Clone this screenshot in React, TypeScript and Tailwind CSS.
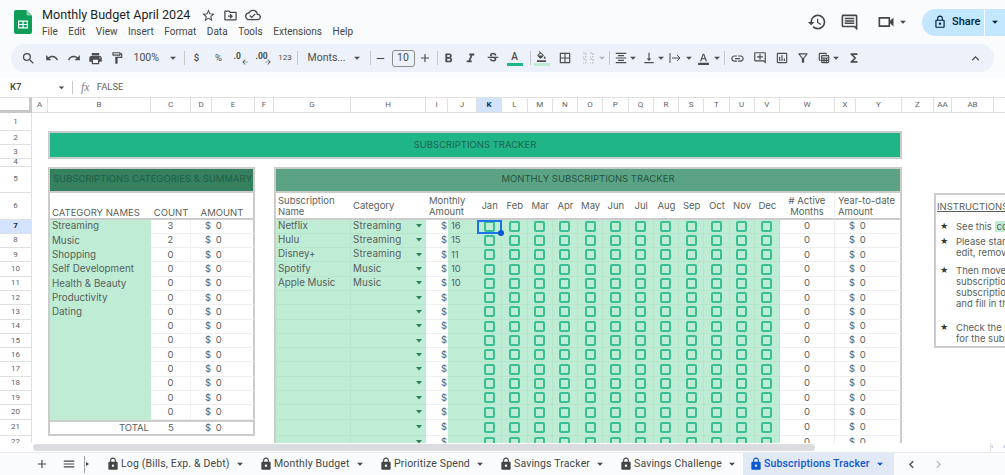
import type { ReactNode } from "react";
import {
  MdAdd,
  MdArrowBack,
  MdArrowDropDown,
  MdArrowForward,
  MdBorderAll,
  MdChevronLeft,
  MdChevronRight,
  MdFormatAlignCenter,
  MdFormatBold,
  MdFormatColorFill,
  MdFormatColorText,
  MdFormatItalic,
  MdFunctions,
  MdHistory,
  MdKeyboardArrowUp,
  MdLink,
  MdLock,
  MdLockOutline,
  MdMenu,
  MdOutlineAddComment,
  MdOutlineCloudDone,
  MdOutlineComment,
  MdOutlineDriveFileMove,
  MdOutlineFilterAlt,
  MdOutlineFormatPaint,
  MdOutlineInsertChart,
  MdOutlineTableView,
  MdOutlineVideocam,
  MdPrint,
  MdRedo,
  MdRemove,
  MdSearch,
  MdStarBorder,
  MdStrikethroughS,
  MdUndo,
  MdVerticalAlignBottom,
} from "react-icons/md";

const COLUMNS = ["A", "B", "C", "D", "E", "F", "G", "H", "I", "J", "K", "L", "M", "N", "O", "P", "Q", "R", "S", "T", "U", "V", "W", "X", "Y", "Z", "AA", "AB", "AC"];
const MONTHS = ["Jan", "Feb", "Mar", "Apr", "May", "Jun", "Jul", "Aug", "Sep", "Oct", "Nov", "Dec"];
const MENUS = ["File", "Edit", "View", "Insert", "Format", "Data", "Tools", "Extensions", "Help"];
const TABS = [
  { name: "Log (Bills, Exp. & Debt)", width: "w-[153px]" },
  { name: "Monthly Budget", width: "w-[120px]" },
  { name: "Prioritize Spend", width: "w-[120px]" },
  { name: "Savings Tracker", width: "w-[120px]" },
  { name: "Savings Challenge", width: "w-[124px]" },
];

const categories = [
  ["Streaming", "3"],
  ["Music", "2"],
  ["Shopping", "0"],
  ["Self Development", "0"],
  ["Health & Beauty", "0"],
  ["Productivity", "0"],
  ["Dating", "0"],
  ["", "0"],
  ["", "0"],
  ["", "0"],
  ["", "0"],
  ["", "0"],
  ["", "0"],
  ["", "0"],
];

const subscriptions = [
  ["Netflix", "Streaming", "16"],
  ["Hulu", "Streaming", "15"],
  ["Disney+", "Streaming", "11"],
  ["Spotify", "Music", "10"],
  ["Apple Music", "Music", "10"],
];

// col and row are 1-based sheet positions, the header takes the first track of the grid
function Cell({
  col,
  row,
  colSpan = 1,
  rowSpan = 1,
  className = "",
  children,
}: {
  col: number;
  row: number;
  colSpan?: number;
  rowSpan?: number;
  className?: string;
  children?: ReactNode;
}) {
  return (
    <div
      className={`flex min-w-0 overflow-hidden whitespace-nowrap ${className}`}
      style={{ gridColumn: `${col + 1} / span ${colSpan}`, gridRow: `${row + 1} / span ${rowSpan}` }}
    >
      {children}
    </div>
  );
}

function ToolIcon({ width = "w-[22px]", className = "", children }: { width?: string; className?: string; children: ReactNode }) {
  return <div className={`flex h-full shrink-0 items-center justify-center ${width} ${className}`}>{children}</div>;
}

function Divider({ className = "" }: { className?: string }) {
  return <div className={`h-[14px] w-px shrink-0 bg-[#c7c7c7] ${className}`} />;
}

function Caret({ className = "" }: { className?: string }) {
  return <MdArrowDropDown className={`shrink-0 text-[14px] ${className}`} />;
}

function Logo() {
  return (
    <svg width="18" height="24" viewBox="0 0 18 24" className="shrink-0">
      <path d="M2 0h10.5L18 5.5V22a2 2 0 0 1-2 2H2a2 2 0 0 1-2-2V2a2 2 0 0 1 2-2z" fill="#0f9d58" />
      <path d="M12.5 0L18 5.5h-4a1.5 1.5 0 0 1-1.5-1.5z" fill="#87ceac" />
      <path d="M4 10.5h10v8H4z" fill="#fff" />
      <path d="M5.200 11.700h3.200v2.200H5.200zM9.600 11.700h3.200v2.200H9.600zM5.200 15.100h3.200v2.200H5.200zM9.600 15.100h3.200v2.200H9.600z" fill="#0f9d58" />
    </svg>
  );
}

function TopBar() {
  return (
    <div className="flex h-[44px] items-center bg-[#f9fbfd] pl-[14px]">
      <Logo />
      <div className="ml-[10px] flex flex-col">
        <div className="flex h-[20px] items-center text-[#1f1f1f]">
          <span className="text-[12.6px] leading-none">Monthly Budget April 2024</span>
          <MdStarBorder className="ml-[11px] text-[15px] text-[#444746]" />
          <MdOutlineDriveFileMove className="ml-[7px] text-[15px] text-[#444746]" />
          <MdOutlineCloudDone className="ml-[7px] text-[16px] text-[#444746]" />
        </div>
        <div className="flex gap-[10.6px] text-[10px] leading-[14px] text-[#444746]">
          {MENUS.map((menu) => (
            <span key={menu}>{menu}</span>
          ))}
        </div>
      </div>
      <div className="ml-auto flex items-center text-[#444746]">
        <MdHistory className="text-[20px]" />
        <MdOutlineComment className="ml-[13px] text-[19px]" />
        <MdOutlineVideocam className="ml-[17px] text-[20px]" />
        <Caret />
        <div className="ml-[12px] flex h-[27px] w-[83px] items-center rounded-l-full bg-[#c2e7ff] text-[#001d35]">
          <MdLockOutline className="ml-[11px] text-[14px]" />
          <span className="ml-[5px] text-[11px] font-medium">Share</span>
          <div className="ml-[4px] h-full w-px bg-[#f9fbfd]" />
          <Caret className="ml-[3px]" />
        </div>
      </div>
    </div>
  );
}

function Toolbar() {
  return (
    <div className="bg-[#f9fbfd] px-[11px] pb-[5px]">
      <div className="flex h-[28px] items-center rounded-full bg-[#edf2fa] pl-[7px] text-[#4a4d4c]">
        <ToolIcon width="w-[21.500px]"><MdSearch className="text-[15px]" /></ToolIcon>
        <ToolIcon width="w-[21.500px]" className="ml-[2px]"><MdUndo className="text-[14px]" /></ToolIcon>
        <ToolIcon width="w-[21.500px]"><MdRedo className="text-[14px]" /></ToolIcon>
        <ToolIcon width="w-[21.500px]"><MdPrint className="text-[15px]" /></ToolIcon>
        <ToolIcon width="w-[21.500px]"><MdOutlineFormatPaint className="text-[14px]" /></ToolIcon>
        <div className="ml-[6px] flex w-[44px] items-center text-[10.5px]">
          <span>100%</span>
          <Caret className="ml-[7px]" />
        </div>
        <Divider className="ml-[6px] mr-[1px]" />
        <ToolIcon className="text-[9.5px] font-medium">$</ToolIcon>
        <ToolIcon className="text-[9.5px]">%</ToolIcon>
        <ToolIcon>
          <div className="relative h-[14px] w-[14px] text-[8.5px] font-bold leading-[10px]">
            .0
            <MdArrowBack className="absolute bottom-[-1px] right-[-1px] text-[8px]" />
          </div>
        </ToolIcon>
        <ToolIcon width="w-[23px]">
          <div className="relative h-[14px] w-[15px] text-[8.5px] font-bold leading-[10px]">
            .00
            <MdArrowForward className="absolute bottom-[-1px] right-[-1px] text-[8px]" />
          </div>
        </ToolIcon>
        <ToolIcon width="w-[21px]" className="text-[8px]">123</ToolIcon>
        <Divider className="ml-[1px]" />
        <div className="ml-[10px] flex w-[56px] shrink-0 items-center text-[10.5px]">
          <span className="w-[42px]">Monts...</span>
          <Caret />
        </div>
        <Divider className="ml-[6px]" />
        <ToolIcon width="w-[20px]"><MdRemove className="text-[13px]" /></ToolIcon>
        <div className="mx-[1px] flex h-[17px] w-[23px] shrink-0 items-center justify-center rounded-[3px] border border-[#8a8d8c] text-[10.5px]">10</div>
        <ToolIcon width="w-[18px]"><MdAdd className="text-[14px]" /></ToolIcon>
        <Divider className="ml-[3px]" />
        <ToolIcon><MdFormatBold className="text-[15px]" /></ToolIcon>
        <ToolIcon><MdFormatItalic className="text-[15px]" /></ToolIcon>
        <ToolIcon><MdStrikethroughS className="text-[14px]" /></ToolIcon>
        <ToolIcon>
          <div className="flex flex-col items-center">
            <span className="text-[10px] font-medium leading-[11px]">A</span>
            <div className="mt-[1px] h-[3px] w-[16px] bg-[#20b586]" />
          </div>
        </ToolIcon>
        <Divider className="ml-[4px]" />
        <ToolIcon>
          <div className="flex flex-col items-center">
            <MdFormatColorFill className="text-[11px]" />
            <div className="mt-[1px] h-[3px] w-[16px] bg-[#bfecd5]" />
          </div>
        </ToolIcon>
        <ToolIcon width="w-[24px]"><MdBorderAll className="text-[14px]" /></ToolIcon>
        <ToolIcon className="text-[#b4b8bd]">
          <svg width="12" height="12" viewBox="0 0 12 12" fill="none" stroke="currentColor" strokeWidth="1">
            <path d="M1 1h3v4H1M8 1h3v4H8M1 7h3v4H1M8 7h3v4H8" strokeDasharray="2 1" />
          </svg>
        </ToolIcon>
        <Caret className="-ml-[4px] text-[#b4b8bd]" />
        <Divider />
        <ToolIcon width="w-[14px]" className="ml-[4px]"><MdFormatAlignCenter className="text-[14px]" /></ToolIcon>
        <Caret className="-ml-[2px]" />
        <ToolIcon width="w-[14px]" className="ml-[2px]"><MdVerticalAlignBottom className="text-[14px]" /></ToolIcon>
        <Caret className="-ml-[2px]" />
        <ToolIcon width="w-[14px]" className="ml-[1px]">
          <svg width="13" height="12" viewBox="0 0 13 12" fill="none" stroke="currentColor" strokeWidth="1">
            <path d="M1 1v10M3 6h8M8 3l3 3-3 3" />
          </svg>
        </ToolIcon>
        <Caret className="-ml-[1px]" />
        <ToolIcon width="w-[14px]" className="ml-[1px]"><MdFormatColorText className="text-[13px]" /></ToolIcon>
        <Caret className="-ml-[1px]" />
        <Divider />
        <ToolIcon className="ml-[2px]"><MdLink className="text-[15px]" /></ToolIcon>
        <ToolIcon><MdOutlineAddComment className="text-[14px]" /></ToolIcon>
        <ToolIcon><MdOutlineInsertChart className="text-[14px]" /></ToolIcon>
        <ToolIcon width="w-[21px]"><MdOutlineFilterAlt className="text-[14px]" /></ToolIcon>
        <ToolIcon width="w-[18px]" className="ml-[1px]"><MdOutlineTableView className="text-[14px]" /></ToolIcon>
        <Caret className="-ml-[4px]" />
        <ToolIcon width="w-[18px]" className="ml-[2px]"><MdFunctions className="text-[14px]" /></ToolIcon>
        <MdKeyboardArrowUp className="ml-auto mr-[11px] text-[15px]" />
      </div>
    </div>
  );
}

function FormulaBar() {
  return (
    <div className="flex h-[20px] items-center bg-white text-[9.5px] text-[#444746]">
      <span className="ml-[10px] w-[45px] font-medium">K7</span>
      <MdArrowDropDown className="text-[13px]" />
      <div className="ml-[4px] h-[13px] w-px bg-[#c7c7c7]" />
      <span className="ml-[8px] font-['Liberation_Serif',serif] text-[12px] italic text-[#80868b]">fx</span>
      <span className="ml-[7px] text-[#5f6368]">FALSE</span>
    </div>
  );
}

function Checkbox() {
  return <div className="m-auto h-[11px] w-[11px] rounded-[2px] border-2 border-[#3abf95]" />;
}

function SummaryTable() {
  return (
    <>
      <Cell col={2} row={5} colSpan={4} className="items-center border-2 border-[#cccccc] bg-[#34805f] pl-[3px] text-[9.5px] text-[#215e47]">
        SUBSCRIPTIONS CATEGORIES &amp; SUMMARY
      </Cell>
      <Cell col={2} row={6} className="items-end border-b-2 border-l-2 border-[#cccccc] pl-[2px] leading-[11px]">CATEGORY NAMES</Cell>
      <Cell col={3} row={6} className="items-end justify-center border-b-2 border-[#cccccc] leading-[11px]">COUNT</Cell>
      <Cell col={4} row={6} colSpan={2} className="items-end justify-center border-b-2 border-r-2 border-[#cccccc] leading-[11px]">AMOUNT</Cell>
      {categories.map(([name, count], i) => (
        <div key={i} className="contents">
          <Cell col={2} row={7 + i} className="items-center border-l-2 border-[#cccccc] bg-[#bfecd5] pl-[2px] text-[9.8px]">{name}</Cell>
          <Cell col={3} row={7 + i} className="items-center justify-center border-b border-r border-[#efefef]">{count}</Cell>
          <Cell col={4} row={7 + i} colSpan={2} className="items-center border-b border-r-2 border-b-[#efefef] border-r-[#cccccc] pl-[14px] [word-spacing:2px]">
            $ 0
          </Cell>
        </div>
      ))}
      <Cell col={2} row={21} className="items-center justify-end border-2 border-r-0 border-[#cccccc] pr-[2px]">TOTAL</Cell>
      <Cell col={3} row={21} className="items-center justify-center border-y-2 border-[#cccccc]">5</Cell>
      <Cell col={4} row={21} colSpan={2} className="items-center border-y-2 border-r-2 border-[#cccccc] pl-[14px] [word-spacing:2px]">$ 0</Cell>
    </>
  );
}

function TrackerTable() {
  const rows = Array.from({ length: 16 }, (_, i) => i);
  return (
    <>
      <Cell col={7} row={5} colSpan={19} className="items-center justify-center border-2 border-[#cccccc] bg-[#5ca385] text-[9.5px] text-[#24543f]">
        MONTHLY SUBSCRIPTIONS TRACKER
      </Cell>
      <Cell col={7} row={6} className="items-center border-b-2 border-l-2 border-[#cccccc] pl-[2px] pt-[2px] leading-[11px] whitespace-pre">{"Subscription\nName"}</Cell>
      <Cell col={8} row={6} className="items-center border-b-2 border-[#cccccc] pl-[2px] pt-[2px]">Category</Cell>
      <Cell col={9} row={6} colSpan={2} className="items-center border-b-2 border-[#cccccc] pl-[3px] pt-[2px] leading-[11px] whitespace-pre">{"Monthly\nAmount"}</Cell>
      {MONTHS.map((month, i) => (
        <Cell key={month} col={11 + i} row={6} className="items-center justify-center border-b-2 border-[#cccccc] pt-[2px]">{month}</Cell>
      ))}
      <Cell col={23} row={6} className="items-center justify-center border-b-2 border-r border-b-[#cccccc] border-r-[#efefef] pt-[2px] text-center leading-[11px] whitespace-pre">{"# Active\nMonths"}</Cell>
      <Cell col={24} row={6} colSpan={2} className="items-center border-b-2 border-r-2 border-[#cccccc] pl-[3px] pt-[2px] leading-[11px] whitespace-pre">{"Year-to-date\nAmount"}</Cell>
      {rows.map((i) => {
        const sub = subscriptions[i];
        return (
          <div key={i} className="contents">
            <Cell col={7} row={7 + i} className="items-center border-b border-l-2 border-r border-b-[#b6e5cc] border-l-[#cccccc] border-r-[#b6e5cc] bg-[#bfecd5] pl-[2px] text-[9.8px]">{sub?.[0]}</Cell>
            <Cell col={8} row={7 + i} className="items-center border-b border-[#b6e5cc] bg-[#bfecd5] pl-[2px] text-[9.8px] tracking-[0.15px]">
              {sub?.[1]}
              <svg width="6" height="4" viewBox="0 0 6 4" className="ml-auto mr-[4px] shrink-0">
                <path d="M0 0h6L3 3.500z" fill="#2e7d5b" />
              </svg>
            </Cell>
            <Cell col={9} row={7 + i} className="items-center justify-end border-b border-[#efefef] pr-[1px]">$</Cell>
            <Cell col={10} row={7 + i} className="items-center border-b border-[#b6e5cc] bg-[#bfecd5] pl-[3px]">{sub?.[2]}</Cell>
            {MONTHS.map((month, m) => (
              <Cell key={month} col={11 + m} row={7 + i} className="border-b border-r border-[#b6e5cc] bg-[#bfecd5]">
                <Checkbox />
              </Cell>
            ))}
            <Cell col={23} row={7 + i} className="items-center justify-center border-b border-r border-[#efefef]">0</Cell>
            <Cell col={24} row={7 + i} colSpan={2} className="items-center border-b border-r-2 border-b-[#efefef] border-r-[#cccccc] pl-[14px] [word-spacing:2px]">$ 0</Cell>
          </div>
        );
      })}
    </>
  );
}

function Instructions() {
  const items = [
    { lines: ["See this color cell"], chip: true, gap: "mb-[4px]" },
    { lines: ["Please start by adding your categories,", "edit, remove or add more as you need."], gap: "mb-[7px]" },
    { lines: ["Then move on to listing all of your", "subscriptions, select a category for each", "subscription, type the monthly amount", "and fill in the checkboxes."], gap: "mb-[13px]" },
    { lines: ["Check the box each month you paid", "for the subscription."], gap: "" },
  ];
  return (
    <Cell col={27} row={6} colSpan={3} rowSpan={10} className="flex-col border-2 border-r-0 border-[#cccccc] pl-[1px] text-[9.5px] leading-[11px]">
      <span className="mt-[6px] underline">INSTRUCTIONS</span>
      <div className="mt-[9px] flex flex-col">
        {items.map((item, i) => (
          <div key={i} className={`flex ${item.gap}`}>
            <span className="w-[19px] shrink-0 pl-[3px] text-[8px] text-[#333]">★</span>
            <div className="flex flex-col">
              {item.lines.map((line) =>
                item.chip ? (
                  <span key={line}>
                    See this <span className="bg-[#bfecd5] px-[2px]">color</span> cell
                  </span>
                ) : (
                  <span key={line}>{line}</span>
                ),
              )}
            </div>
          </div>
        ))}
      </div>
    </Cell>
  );
}

function Sheet() {
  const rowNumbers = Array.from({ length: 22 }, (_, i) => i + 1);
  return (
    <div className="grid h-[346px] grid-cols-[32px_16px_103px_40px_21px_43px_19px_77px_75px_22px_29px_repeat(12,25.25px)_55px_21px_46px_32px_18px_42px_60px] grid-rows-[16px_18px_14px_14px_7.5px_26px_27px_repeat(14,14.3px)_16px_14px] overflow-hidden bg-white font-['Inter',sans-serif] text-[9.5px] text-[#585f5b]">
      <div className="col-start-1 row-start-1 border-b-[3px] border-r-[3px] border-t border-[#c7c7c7] border-t-[#e0e0e0]" />
      {COLUMNS.map((name, i) => (
        <div
          key={name}
          className={`flex items-center justify-center border-b border-r border-t border-[#e0e0e0] font-['Roboto',sans-serif] text-[8px] ${name === "K" ? "bg-[#d3e3fd] font-bold text-[#0b2f66]" : "text-[#5f6368]"}`}
          style={{ gridColumn: i + 2, gridRow: 1 }}
        >
          {name}
        </div>
      ))}
      {rowNumbers.map((n) => (
        <div
          key={n}
          className={`flex items-center justify-center border-b border-r border-[#e0e0e0] font-['Roboto',sans-serif] text-[8px] ${n === 7 ? "bg-[#d3e3fd] font-bold text-[#0b2f66]" : "text-[#5f6368]"}`}
          style={{ gridColumn: 1, gridRow: n + 1 }}
        >
          {n}
        </div>
      ))}

      <Cell col={2} row={2} colSpan={24} rowSpan={2} className="items-center justify-center border-2 border-[#cccccc] bg-[#20b586] text-[9.5px] text-[#1f6350]">
        SUBSCRIPTIONS TRACKER
      </Cell>

      <SummaryTable />
      <TrackerTable />
      <Instructions />

      <Cell col={11} row={7} className="relative z-10 overflow-visible border-2 border-[#1a73e8]">
        <span className="absolute bottom-[-4px] right-[-4px] h-[6px] w-[6px] rounded-full bg-[#0b57d0]" />
      </Cell>
    </div>
  );
}

function Scrollbar() {
  return (
    <div className="flex h-[9px] items-center bg-white pl-[33px]">
      <div className="h-[7px] w-[782px] rounded-full bg-[#dadce0]" />
      <div className="ml-auto flex h-full w-[15px] items-center justify-between border-l border-[#e0e0e0] text-[7px] text-[#80868b]">
        <span>‹</span>
        <span>›</span>
      </div>
    </div>
  );
}

function TabBar() {
  return (
    <div className="flex h-[23px] items-center border-t border-[#e8eaed] bg-[#f9fbfd] font-['Roboto',sans-serif] text-[10.5px] tracking-[0.15px] text-[#444746] whitespace-nowrap">
      <MdAdd className="ml-[35px] text-[14px]" />
      <MdMenu className="ml-[13px] text-[14px]" />
      <div className="ml-[8px] h-[17px] w-px bg-[#9aa0a6]" />
      <svg width="3" height="4" viewBox="0 0 3 4" className="ml-[1px]">
        <path d="M0 0l3 2-3 2z" fill="#444746" />
      </svg>
      <div className="ml-[17px] flex">
        {TABS.map((tab) => (
          <div key={tab.name} className={`flex shrink-0 items-center ${tab.width}`}>
            <MdLock className="text-[14px]" />
            <span className="ml-[1px]">{tab.name}</span>
            <Caret className="ml-[3px]" />
          </div>
        ))}
      </div>
      <div className="flex h-full w-[151px] shrink-0 items-center bg-[#e1e9f7] pl-[6px] text-[#0b57d0]">
        <MdLock className="text-[14px]" />
        <span className="ml-[1px] font-medium">Subscriptions Tracker</span>
        <Caret className="ml-[3px]" />
      </div>
      <MdChevronLeft className="ml-[10px] text-[15px]" />
      <MdChevronRight className="ml-[12px] text-[15px] text-[#b4b8bd]" />
    </div>
  );
}

export default function App() {
  return (
    <div className="h-[475px] w-[1005px] overflow-hidden bg-white font-['Roboto',sans-serif]">
      <TopBar />
      <Toolbar />
      <FormulaBar />
      <Sheet />
      <Scrollbar />
      <TabBar />
    </div>
  );
}
